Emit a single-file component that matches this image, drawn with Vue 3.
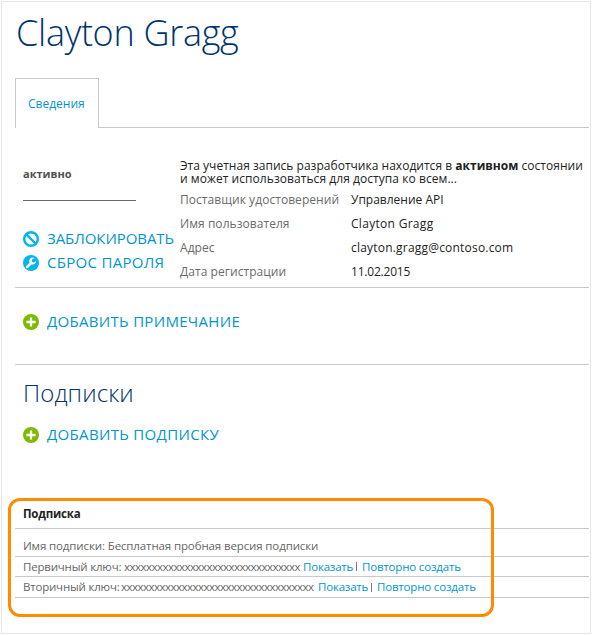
<script setup>
const fields = [
  { label: 'Поставщик удостоверений', value: 'Управление API', name: 'provider' },
  { label: 'Имя пользователя', value: 'Clayton Gragg', name: 'user' },
  { label: 'Адрес', value: 'clayton.gragg@contoso.com', name: 'mail' },
  { label: 'Дата регистрации', value: '11.02.2015', name: 'date' },
]
const keys = [
  { label: 'Первичный ключ:', mask: 'x'.repeat(32), name: 'primary' },
  { label: 'Вторичный ключ:', mask: 'x'.repeat(35), name: 'secondary' },
]
</script>

<template>
  <main class="page">
    <h1 class="title"><span>Clayton Gragg</span></h1>
    <nav class="tabs">
      <a class="tab"><span>Сведения</span></a>
      <div class="tab-rest"></div>
    </nav>

    <section class="details">
      <div class="side">
        <div class="status"><span>активно</span></div>
        <a class="action block">
          <svg class="icon" viewBox="0 0 16 16">
            <circle cx="8" cy="8" r="6.8" fill="none" stroke="#00b4ef" stroke-width="2.4" />
            <path d="M3.4 3.4 12.6 12.6" stroke="#00b4ef" stroke-width="2.3" />
          </svg>
          <span>ЗАБЛОКИРОВАТЬ</span>
        </a>
        <a class="action reset">
          <svg class="icon" viewBox="0 0 16 16">
            <circle cx="8" cy="8" r="8" fill="#00b4ef" />
            <path d="M4 12.1 8.1 8" stroke="#fff" stroke-width="2.5" stroke-linecap="round" />
            <path d="M11.5 3.1A3.5 3.5 0 1 0 13.2 6.1L11 7.5 9 6.9 8.8 4.8Z" fill="#fff" />
          </svg>
          <span>СБРОС ПАРОЛЯ</span>
        </a>
      </div>
      <div class="info">
        <div class="summary">
          <div class="line-one">Эта учетная запись разработчика находится в <b>активном</b> состоянии</div>
          <div class="line-two">и может использоваться для доступа ко всем...</div>
        </div>
        <dl class="fields">
          <div v-for="f in fields" :key="f.name" class="field" :class="f.name">
            <dt><span>{{ f.label }}</span></dt>
            <dd><span>{{ f.value }}</span></dd>
          </div>
        </dl>
      </div>
    </section>

    <section class="notes">
      <a class="action note">
        <svg class="icon" viewBox="0 0 16 16">
          <circle cx="8" cy="8" r="8" fill="#7fba00" />
          <path d="M8 3.4V12.6M3.4 8H12.6" stroke="#fff" stroke-width="2.3" />
        </svg>
        <span>ДОБАВИТЬ ПРИМЕЧАНИЕ</span>
      </a>
    </section>

    <section class="subs">
      <h2><span>Подписки</span></h2>
      <a class="action add">
        <svg class="icon" viewBox="0 0 16 16">
          <circle cx="8" cy="8" r="8" fill="#7fba00" />
          <path d="M8 3.4V12.6M3.4 8H12.6" stroke="#fff" stroke-width="2.3" />
        </svg>
        <span>ДОБАВИТЬ ПОДПИСКУ</span>
      </a>
      <div class="table">
        <div class="row head"><b>Подписка</b></div>
        <div class="row name"><span>Имя подписки: Бесплатная пробная версия подписки</span></div>
        <div v-for="k in keys" :key="k.name" class="row" :class="k.name">
          <span class="key-label">{{ k.label }}</span>
          <span class="mask">{{ k.mask }}</span>
          <a class="show">Показать</a>
          <i class="bar"></i>
          <a class="renew">Повторно создать</a>
        </div>
      </div>
    </section>
    <div class="highlight"></div>
  </main>
</template>

<style>
body { background: #fff; }
</style>

<style scoped>
* { box-sizing: border-box; }
.page {
  position: relative;
  width: 590px;
  height: 633px;
  margin: 1px 0 0 1px;
  border: 1px solid #e6e6e6;
  padding-left: 13px;
  font: 12px/16px "Open Sans", "Noto Sans", sans-serif;
  color: #222;
  white-space: nowrap;
}
.title {
  margin: 0;
  height: 76px;
  padding: 6px 0 0 1px;
  font-size: 36px;
  line-height: 50px;
  font-weight: 300;
  color: #00356b;
  letter-spacing: -0.3px;
}
.tabs { display: flex; width: 574px; height: 50px; }
.tab {
  width: 84px;
  border: 1px solid #c8c8c8;
  border-bottom: 0;
  padding: 17px 0 0 12px;
  color: #0096cc;
}
.tab-rest { flex: 1; border-bottom: 1px solid #c8c8c8; }
.details { display: flex; width: 574px; height: 160px; border-bottom: 1px solid #c8c8c8; }
.side { width: 165px; padding: 38px 0 0 8px; }
.status {
  width: 113px;
  height: 35px;
  border-bottom: 1px solid #666;
  margin-bottom: 26px;
  font-size: 11px;
  font-weight: 700;
  color: #505050;
}
.action {
  display: flex;
  align-items: center;
  gap: 8px;
  height: 24px;
  font-size: 15px;
  line-height: 22px;
  color: #0096cc;
}
.action span { height: 24px; }
.block { letter-spacing: -0.06px; }
.reset { letter-spacing: 0.3px; }
.note { letter-spacing: 0.31px; }
.add { letter-spacing: 0.33px; margin-left: 8px; }
.icon { width: 16px; height: 16px; flex: none; }
.info { padding-top: 31px; }
.summary { height: 29px; }
.summary div { height: 13px; line-height: 13px; }
.line-one { letter-spacing: 0.02px; }
.line-two { letter-spacing: 0.06px; }
.fields { margin: 0; }
.field { display: flex; height: 24px; line-height: 24px; }
dt { width: 171px; color: #6a6a6a; letter-spacing: 0.05px; }
dd { margin: 0; }
.user dd { letter-spacing: 0.3px; }
.mail dd { letter-spacing: 0.2px; }
.date dd { letter-spacing: -0.2px; }
.notes { width: 574px; height: 77px; padding: 22px 0 0 8px; border-bottom: 1px solid #c8c8c8; }
h2 {
  margin: 0;
  height: 58px;
  padding: 11px 0 0 8px;
  font-size: 24px;
  line-height: 34px;
  font-weight: 300;
  color: #00356b;
  letter-spacing: 0.1px;
}
.table { width: 574px; margin-top: 53px; color: #666; }
.row {
  display: flex;
  align-items: center;
  border-bottom: 1px solid #c8c8c8;
  padding-left: 8px;
  font-size: 11.5px;
  letter-spacing: -0.12px;
}
.head { height: 29px; color: #222; letter-spacing: -0.2px; }
.name { height: 28px; padding-top: 7px; }
.primary { height: 20px; }
.secondary { height: 21px; }
.row a { color: #0096cc; }
.key-label { width: 97px; letter-spacing: -0.2px; }
.mask { width: 177px; margin: 0 2px 0 4px; letter-spacing: -0.52px; }
.secondary .mask { width: 194px; margin: 0 3px 0 1px; }
.show { width: 50px; letter-spacing: -0.2px; }
.bar { width: 1px; height: 9px; background: #777; margin: 0 5px 0 3px; }
.renew { letter-spacing: -0.18px; }
.highlight {
  position: absolute;
  left: 6px;
  top: 496px;
  width: 486px;
  height: 119px;
  border: 3px solid #ff8c00;
  border-radius: 12px;
}
</style>
